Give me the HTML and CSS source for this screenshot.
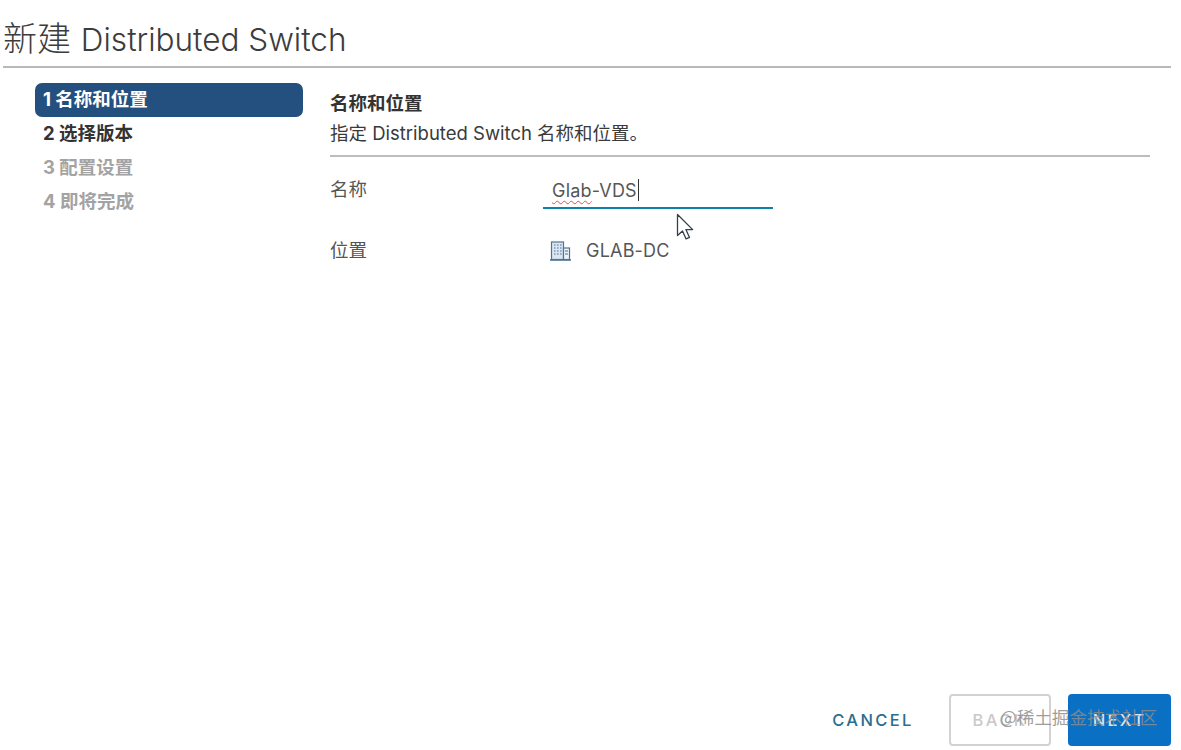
FILE: index.html
```html
<!DOCTYPE html>
<html lang="zh-CN">
<head>
    <meta charset="UTF-8">
    <title>新建 Distributed Switch</title>
    <link rel="stylesheet" href="styles.css">
</head>
<body>
    <div class="wizard">
        <h1 class="wizard-title"><span class="title-cjk">新建</span> Distributed Switch</h1>
        <div class="wizard-body">
            <ul class="steps">
                <li class="step active">1 名称和位置</li>
                <li class="step">2 选择版本</li>
                <li class="step disabled">3 配置设置</li>
                <li class="step disabled">4 即将完成</li>
            </ul>
            <div class="content">
                <div class="content-head">
                    <h2>名称和位置</h2>
                    <p>指定 Distributed Switch 名称和位置。</p>
                </div>
                <div class="form-row row-name">
                    <div class="form-label">名称</div>
                    <div class="name-input"><span class="typo">Glab</span>-VDS<span class="caret"></span></div>
                </div>
                <div class="form-row row-place">
                    <div class="form-label">位置</div>
                    <div class="place">
                        <svg class="dc-icon" width="24" height="22" viewBox="0 0 24 22">
                            <rect x="2.5" y="2" width="12" height="17.5" fill="#dbe6f2" stroke="#4f7596" stroke-width="1.2"/>
                            <rect x="14.5" y="8" width="6" height="11.5" fill="#eef3f8" stroke="#4f7596" stroke-width="1.2"/>
                            <path d="M5 5h1.6M8 5h1.6M11 5h1.6M5 8h1.6M8 8h1.6M11 8h1.6M5 11h1.6M8 11h1.6M11 11h1.6M5 14h1.6M8 14h1.6M11 14h1.6M16 11h3M16 14h3" stroke="#7d9cb8" stroke-width="1.4" fill="none"/>
                            <path d="M1 20h21" stroke="#4f7596" stroke-width="1.6"/>
                        </svg>
                        <span>GLAB-DC</span>
                    </div>
                </div>
            </div>
        </div>
        <div class="wizard-footer">
            <button class="btn btn-link">CANCEL</button>
            <button class="btn btn-back">BACK</button>
            <button class="btn btn-next">NEXT</button>
        </div>
    </div>
    <svg class="cursor" width="20" height="28" viewBox="0 0 20 28">
        <path d="M1.5 1.5v21l5-4.6 3.6 8 3.4-1.5-3.6-7.8h6.8z" fill="#fff" stroke="#33404a" stroke-width="1.3" stroke-linejoin="round"/>
    </svg>
    <div class="watermark">@稀土掘金技术社区</div>
</body>
</html>
```

FILE: styles.css
```css
* {
    box-sizing: border-box;
}
body {
    margin: 0;
    height: 750px;
    overflow: hidden;
    position: relative;
    background: #fff;
    color: #444;
    font-family: Inter, "Noto Sans CJK SC", sans-serif;
}
.wizard {
    height: 750px;
    display: flex;
    flex-direction: column;
    padding: 0 10px 4px 3px;
}
.wizard-title {
    margin: 0;
    height: 68px;
    padding-top: 18px;
    font-size: 31.5px;
    line-height: 42px;
    font-weight: 300;
    color: #3c3c3c;
    border-bottom: 2px solid #b9b9b9;
}
.title-cjk {
    font-size: 34px;
    margin-right: 1px;
}
.wizard-body {
    flex: 1;
    display: flex;
    padding: 15px 21px 0 32px;
}
.steps {
    list-style: none;
    margin: 0;
    padding: 0;
    width: 268px;
    flex-shrink: 0;
}
.step {
    height: 34px;
    line-height: 32px;
    padding-left: 8px;
    font-size: 18.5px;
    font-weight: 700;
    color: #333;
    border-radius: 7px;
}
.step.active {
    background: #23507f;
    color: #fff;
}
.step.disabled {
    color: #a3a3a3;
}
.content {
    flex: 1;
    margin-left: 27px;
}
.content-head {
    height: 74px;
    padding-top: 8px;
    border-bottom: 2px solid #bdbdbd;
}
.content-head h2 {
    margin: 0;
    font-size: 18.5px;
    line-height: 25px;
    font-weight: 700;
    color: #333;
}
.content-head p {
    margin: 6px 0 0;
    font-size: 18.5px;
    line-height: 22px;
    color: #3a3a3a;
}
.form-row {
    display: flex;
}
.row-name {
    margin-top: 19px;
}
.row-place {
    margin-top: 28px;
    align-items: center;
}
.form-label {
    width: 213px;
    font-size: 18.5px;
    line-height: 27px;
    color: #555;
}
.name-input {
    width: 230px;
    height: 33px;
    padding: 3px 0 0 9px;
    font-size: 18px;
    line-height: 24px;
    letter-spacing: 0.2px;
    color: #565656;
    border-bottom: 2px solid #0f7ea8;
}
.typo {
    text-decoration: underline wavy #d9534f 1px;
    text-underline-offset: 3px;
}
.caret {
    display: inline-block;
    width: 1px;
    height: 22px;
    margin-left: 1px;
    vertical-align: -4px;
    background: #333;
}
.place {
    display: flex;
    align-items: center;
    gap: 13px;
    padding-left: 6px;
    font-size: 18px;
    letter-spacing: 0.2px;
    color: #565656;
}
.wizard-footer {
    display: flex;
    justify-content: flex-end;
    align-items: center;
    gap: 17px;
}
.btn {
    height: 52px;
    width: 103px;
    border-radius: 4px;
    font-family: Inter, sans-serif;
    font-size: 16.5px;
    font-weight: 500;
    letter-spacing: 2.4px;
    background: none;
    border: 2px solid transparent;
    padding: 0;
}
.btn-link {
    width: 100px;
    color: #2c6d8f;
    margin-right: 9px;
}
.btn-back {
    width: 102px;
    border-color: #d2d2d2;
    color: #c9c9c9;
}
.btn-next {
    background: #0a70c4;
    color: #d9e6ee;
}
.cursor {
    position: absolute;
    left: 676px;
    top: 213px;
}
.watermark {
    position: absolute;
    left: 1000px;
    top: 705px;
    font-family: "Noto Sans CJK SC", sans-serif;
    font-size: 17.6px;
    line-height: 24px;
    color: rgba(140, 140, 140, 0.85);
}
```
